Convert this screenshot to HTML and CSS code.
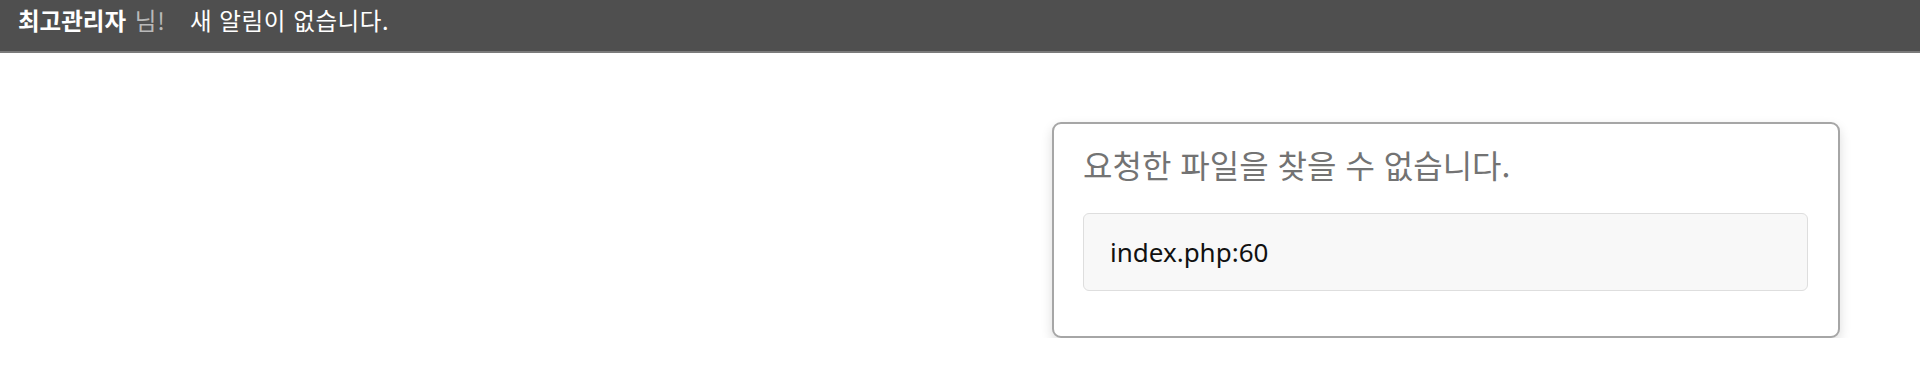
FILE: index.html
```html
<!DOCTYPE html>
<html lang="ko">
<head>
<meta charset="utf-8">
<title>오류</title>
<link rel="stylesheet" href="styles.css">
</head>
<body>
<header class="topbar">
  <span class="user"><strong class="name">최고관리자</strong> <span class="honor">님!</span></span>
  <span class="notice">새 알림이 없습니다.</span>
</header>
<main class="page">
  <section class="card">
    <h1 class="card-title">요청한 파일을 찾을 수 없습니다.</h1>
    <pre class="trace">index.php:60</pre>
  </section>
</main>
</body>
</html>
```
FILE: styles.css
```css
html, body {
  margin: 0;
  padding: 0;
  background: #ffffff;
  font-family: "Noto Sans CJK KR", "Noto Sans", sans-serif;
}

.topbar {
  height: 47px;
  background: #4f4f4f;
  border-bottom: 2px solid #7a7a7a;
  display: flex;
  align-items: flex-start;
  padding: 4px 0 0 18px;
  font-size: 23.5px;
  line-height: 32px;
  color: #ffffff;
}

.name {
  font-weight: 700;
}

.honor {
  color: #b9b9b9;
  margin-left: 2px;
  letter-spacing: 1px;
}

.notice {
  margin-left: 24px;
  letter-spacing: 0.6px;
}

.page {
  display: flex;
  justify-content: flex-end;
  padding: 69px 80px 0 0;
}

.card {
  width: 788px;
  box-sizing: border-box;
  border: 2px solid #a6a6a6;
  border-radius: 9px;
  background: #ffffff;
  box-shadow: 0 5px 12px rgba(0, 0, 0, 0.14);
  padding: 20px 30px 45px 29px;
}

.card-title {
  margin: 0;
  font-size: 32px;
  line-height: 40px;
  font-weight: 400;
  color: #737373;
}

.trace {
  margin: 29px 0 0 0;
  height: 78px;
  box-sizing: border-box;
  border: 1px solid #dedede;
  border-radius: 6px;
  background: #f8f8f8;
  padding: 0 26px;
  font-family: "Noto Sans", "Noto Sans CJK KR", sans-serif;
  font-size: 26px;
  line-height: 76px;
  color: #111111;
}
```
